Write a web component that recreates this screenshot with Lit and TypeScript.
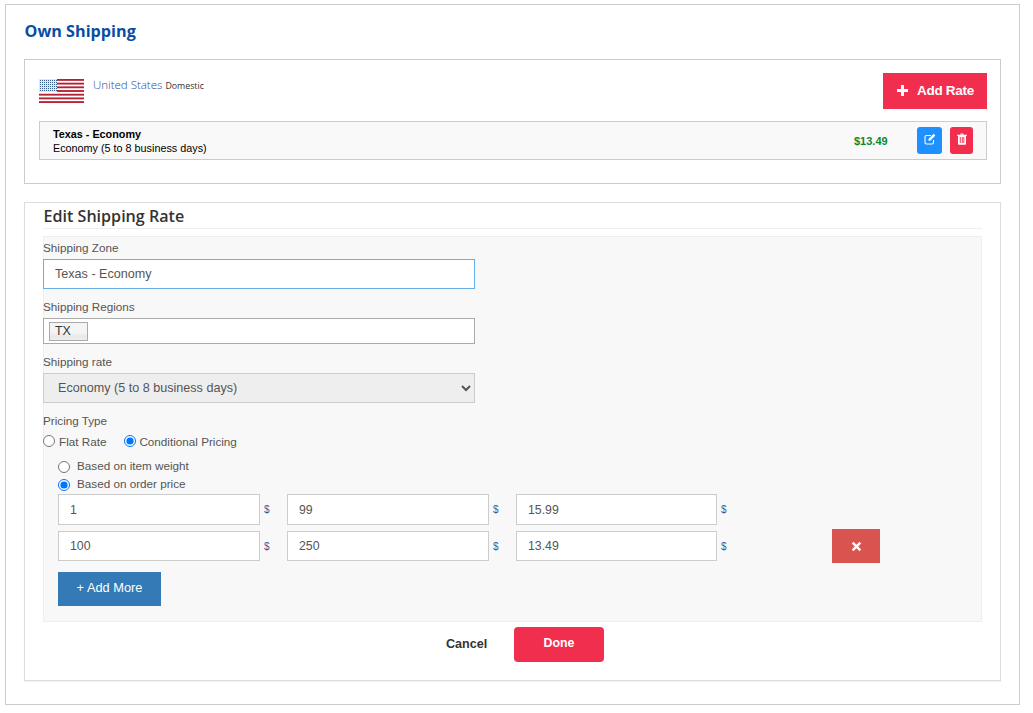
import { LitElement, html, css, svg } from 'lit';
import { customElement, state } from 'lit/decorators.js';

const stripes = Array.from({ length: 13 }, (_, i) => i);

@customElement('app-root')
export class AppRoot extends LitElement {
  @state()
  private rows = [
    { from: '1', to: '99', rate: '15.99', removable: false },
    { from: '100', to: '250', rate: '13.49', removable: true },
  ];

  private flag() {
    const dots = [];
    for (let y = 0; y < 6; y++) {
      for (let x = 0; x < 9; x++) {
        dots.push(svg`<rect x=${1 + x * 2} y=${1 + y * 2} width="1" height="1" fill="#3a5f92"></rect>`);
      }
    }
    return html`
      <svg class="flag" width="45" height="24" viewBox="0 0 45 24">
        <rect width="45" height="24" fill="#fff"></rect>
        ${stripes.map((i) =>
          i % 2 === 0
            ? svg`<rect x="0" y=${(i * 24) / 13} width="45" height=${24 / 13} fill="#b22234"></rect>`
            : null
        )}
        <rect width="18" height="13" fill="#e3e8f0"></rect>
        ${dots}
      </svg>
    `;
  }

  render() {
    return html`
      <div class="page">
        <h2 class="title">Own Shipping</h2>

        <section class="country">
          <div class="country-head">
            ${this.flag()}
            <div class="country-name">United States <small>Domestic</small></div>
            <button class="add-rate">
              <svg width="11" height="11" viewBox="0 0 11 11"><path d="M4 0h3v4h4v3H7v4H4V7H0V4h4z" fill="#fff"></path></svg>
              <span>Add Rate</span>
            </button>
          </div>
          <div class="rate-row">
            <div class="rate-text">
              <b>Texas - Economy</b>
              <span>Economy (5 to 8 business days)</span>
            </div>
            <div class="price">$13.49</div>
            <button class="icon-btn edit" aria-label="Edit">
              <svg width="12" height="12" viewBox="0 0 12 12" fill="none">
                <path d="M9.5 7v2.500a1.500 1.500 0 0 1-1.500 1.500H2.500A1.500 1.500 0 0 1 1 9.500V4a1.500 1.500 0 0 1 1.500-1.500H7" stroke="#fff" stroke-width="1.100"></path>
                <path d="M4.500 6 9.700.8l1.700 1.700L6.200 7.700H4.500z" fill="#fff"></path>
              </svg>
            </button>
            <button class="icon-btn del" aria-label="Delete">
              <svg width="10" height="12" viewBox="0 0 10 12">
                <path d="M3.300 1.800 3.800.4h2.400l.5 1.400H10v1H9v8a1 1 0 0 1-1 1H2a1 1 0 0 1-1-1v-8H0v-1zM4.300 1.800h1.400L5.500 1.200h-1zM2.800 4v6h.9V4zm2 0v6h.9V4zm1.600 0v6h.9V4z" fill="#fff" fill-rule="evenodd"></path>
              </svg>
            </button>
          </div>
        </section>

        <section class="edit-box">
          <h3 class="edit-title">Edit Shipping Rate</h3>
          <div class="panel">
            <label class="lbl first">Shipping Zone</label>
            <input class="field zone" type="text" .value=${'Texas - Economy'} />

            <label class="lbl regions-lbl">Shipping Regions</label>
            <div class="regions"><span class="tag">TX</span></div>

            <label class="lbl rate-lbl">Shipping rate</label>
            <select class="field rate-select">
              <option>Economy (5 to 8 business days)</option>
            </select>

            <label class="lbl pricing-lbl">Pricing Type</label>
            <div class="pricing-type">
              <label class="radio"><input type="radio" name="ptype" /><span>Flat Rate</span></label>
              <label class="radio cond"><input type="radio" name="ptype" checked /><span>Conditional Pricing</span></label>
            </div>

            <div class="conditional">
              <label class="radio sub"><input type="radio" name="basis" /><span>Based on item weight</span></label>
              <label class="radio sub"><input type="radio" name="basis" checked /><span>Based on order price</span></label>

              <div class="price-rows">
                ${this.rows.map(
                  (r) => html`
                    <div class="price-row ${r.removable ? 'second' : ''}">
                      <input class="num" type="text" .value=${r.from} /><span class="cur">$</span>
                      <input class="num" type="text" .value=${r.to} /><span class="cur">$</span>
                      <input class="num last" type="text" .value=${r.rate} /><span class="cur">$</span>
                      ${r.removable
                        ? html`<button class="remove" aria-label="Remove">
                            <svg width="11" height="11" viewBox="0 0 10 10"><path d="M1.500 1.500l7 7M8.500 1.500l-7 7" stroke="#fff" stroke-width="2.200"></path></svg>
                          </button>`
                        : null}
                    </div>
                  `
                )}
              </div>
              <button class="add-more">+ Add More</button>
            </div>
          </div>
          <div class="actions">
            <button class="cancel">Cancel</button>
            <button class="done">Done</button>
          </div>
        </section>
      </div>
    `;
  }

  static styles = css`
    :host {
      display: block;
      padding: 4px 13px 7px 5px;
      font-family: 'Liberation Sans', Arial, sans-serif;
      color: #555;
      background: #fff;
    }
    * {
      box-sizing: border-box;
    }
    button {
      font-family: inherit;
      border: none;
      cursor: pointer;
    }
    .page {
      border: 1px solid #ccc;
      height: 701px;
      padding: 0 18px 0 18px;
    }
    .title {
      margin: 0;
      padding: 15px 0 0 0.5px;
      height: 54px;
      font: 700 16.2px/22px 'Open Sans', sans-serif;
      color: #0b4da2;
    }
    .country {
      border: 1px solid #ccc;
      height: 125px;
      padding: 13px 13px 0 14px;
    }
    .country-head {
      display: flex;
      align-items: flex-start;
      height: 48px;
    }
    .flag {
      margin-top: 6px;
      flex: none;
    }
    .country-name {
      margin: 3px 0 0 9px;
      font: 300 11.5px/18px 'Open Sans', sans-serif;
      color: #24489c;
      flex: 1;
    }
    .country-name small {
      font-size: 8.8px;
      font-weight: 400;
      color: #333;
    }
    .add-rate {
      width: 104px;
      height: 36px;
      background: #f22e4e;
      color: #fff;
      font-size: 13.5px;
      font-weight: 700;
      letter-spacing: -0.3px;
      display: flex;
      align-items: center;
      gap: 9px;
      padding: 0 0 1px 14px;
    }
    .rate-row {
      border: 1px solid #ccc;
      background: #f9f9f9;
      height: 39px;
      display: flex;
      align-items: center;
      padding-left: 13px;
    }
    .rate-text {
      flex: 1;
      display: flex;
      flex-direction: column;
      font-size: 10.8px;
      line-height: 14px;
      color: #000;
    }
    .price {
      width: 63px;
      font-size: 11px;
      font-weight: 700;
      color: #0a8a2f;
    }
    .icon-btn {
      height: 27px;
      border-radius: 3px;
      padding: 0;
      display: flex;
      align-items: center;
      justify-content: center;
    }
    .icon-btn svg {
      margin-top: -4px;
    }
    .edit {
      width: 25px;
      background: #1e90ff;
      margin-right: 8px;
    }
    .del {
      width: 23px;
      background: #f22e4e;
      margin-right: 13px;
    }
    .edit-box {
      margin-top: 18px;
      border: 1px solid #ddd;
      box-shadow: 0 1px 1px rgba(0, 0, 0, 0.05);
      height: 479px;
      padding: 0 18px;
    }
    .edit-title {
      margin: 0;
      height: 26px;
      padding: 2px 0 0 0.5px;
      border-bottom: 1px solid #eee;
      font: 600 16.1px/22px 'Open Sans', sans-serif;
      color: #333;
    }
    .panel {
      margin-top: 7px;
      height: 386px;
      background: #f8f8f8;
      border: 1px solid #eee;
      padding-right: 0;
    }
    .lbl {
      display: block;
      margin-left: -1px;
      font-size: 11.7px;
      line-height: 16px;
      color: #555;
    }
    .first {
      padding-top: 3px;
      height: 22px;
    }
    .field {
      display: block;
      width: 432px;
      height: 30px;
      margin-left: -1px;
      font: 12.6px 'Liberation Sans', Arial, sans-serif;
      color: #555;
      outline: none;
    }
    .zone {
      border: 1px solid #66afe9;
      background: #fff;
      padding: 0 11px;
    }
    .lbl.regions-lbl {
      margin-top: 10px;
      height: 19px;
    }
    .regions {
      width: 432px;
      height: 26px;
      margin-left: -1px;
      background: #fff;
      border: 1px solid #aaa;
      padding: 3px 5px;
    }
    .tag {
      display: block;
      width: 39px;
      height: 19px;
      border: 1px solid #aaa;
      background: linear-gradient(#f4f4f4 0%, #f4f4f4 55%, #e8e8e8 80%, #eee 100%);
      font-size: 12.4px;
      line-height: 16px;
      padding-left: 5px;
      color: #333;
    }
    .lbl.rate-lbl {
      margin-top: 10px;
      height: 19px;
    }
    .rate-select {
      background: #eee;
      border: 1px solid #ccc;
      padding-left: 10px;
      border-radius: 0;
    }
    .lbl.pricing-lbl {
      margin-top: 10px;
      height: 16px;
    }
    .pricing-type {
      display: flex;
      gap: 18px;
      margin: 4px 0 0 -1px;
      height: 17px;
    }
    .radio {
      display: flex;
      align-items: center;
      font-size: 11.7px;
      line-height: 16px;
      color: #555;
    }
    .radio input {
      width: 12px;
      height: 12px;
      margin: -2px 4px 0 0;
      flex: none;
    }
    .radio.cond input {
      margin-right: 3px;
    }
    .pricing-type .radio span {
      margin-top: 1px;
    }
    .conditional {
      padding: 0 0 0 14px;
      margin-top: 7px;
    }
    .radio.sub {
      height: 18px;
    }
    .radio.sub input {
      margin: 1px 7px 0 0;
    }
    .radio.sub span {
      margin-top: -1px;
    }
    .price-rows {
      margin-top: 1px;
    }
    .price-row {
      display: flex;
      align-items: flex-start;
      height: 37px;
    }
    .price-row.second {
      height: 41px;
    }
    .num {
      width: 202px;
      height: 31px;
      border: 1px solid #ccc;
      background: #fff;
      font: 12.3px 'Liberation Sans', Arial, sans-serif;
      color: #555;
      padding: 0 11px;
      outline: none;
    }
    .num.last {
      width: 201px;
    }
    .second .num {
      height: 30px;
    }
    .cur {
      width: 27px;
      padding-left: 4px;
      font-size: 10px;
      line-height: 31px;
      color: #3b5b93;
    }
    .remove {
      width: 48px;
      height: 34px;
      margin: -2px 0 0 88px;
      background: #d9534f;
      padding: 0;
      display: flex;
      align-items: center;
      justify-content: center;
    }
    .add-more {
      width: 103px;
      height: 34px;
      background: #337ab7;
      color: #fff;
      font-size: 12.8px;
      padding: 0 0 4px;
    }
    .actions {
      display: flex;
      align-items: center;
      margin-top: 5px;
      padding-left: 403px;
      height: 35px;
    }
    .cancel {
      background: none;
      width: 68px;
      padding: 0 0 2px;
      text-align: left;
      font-size: 12.6px;
      font-weight: 700;
      color: #333;
    }
    .done {
      width: 90px;
      height: 35px;
      border-radius: 4px;
      background: #f22e4e;
      color: #fff;
      font-size: 12.4px;
      font-weight: 700;
      padding: 0 0 4px;
    }
  `;
}
